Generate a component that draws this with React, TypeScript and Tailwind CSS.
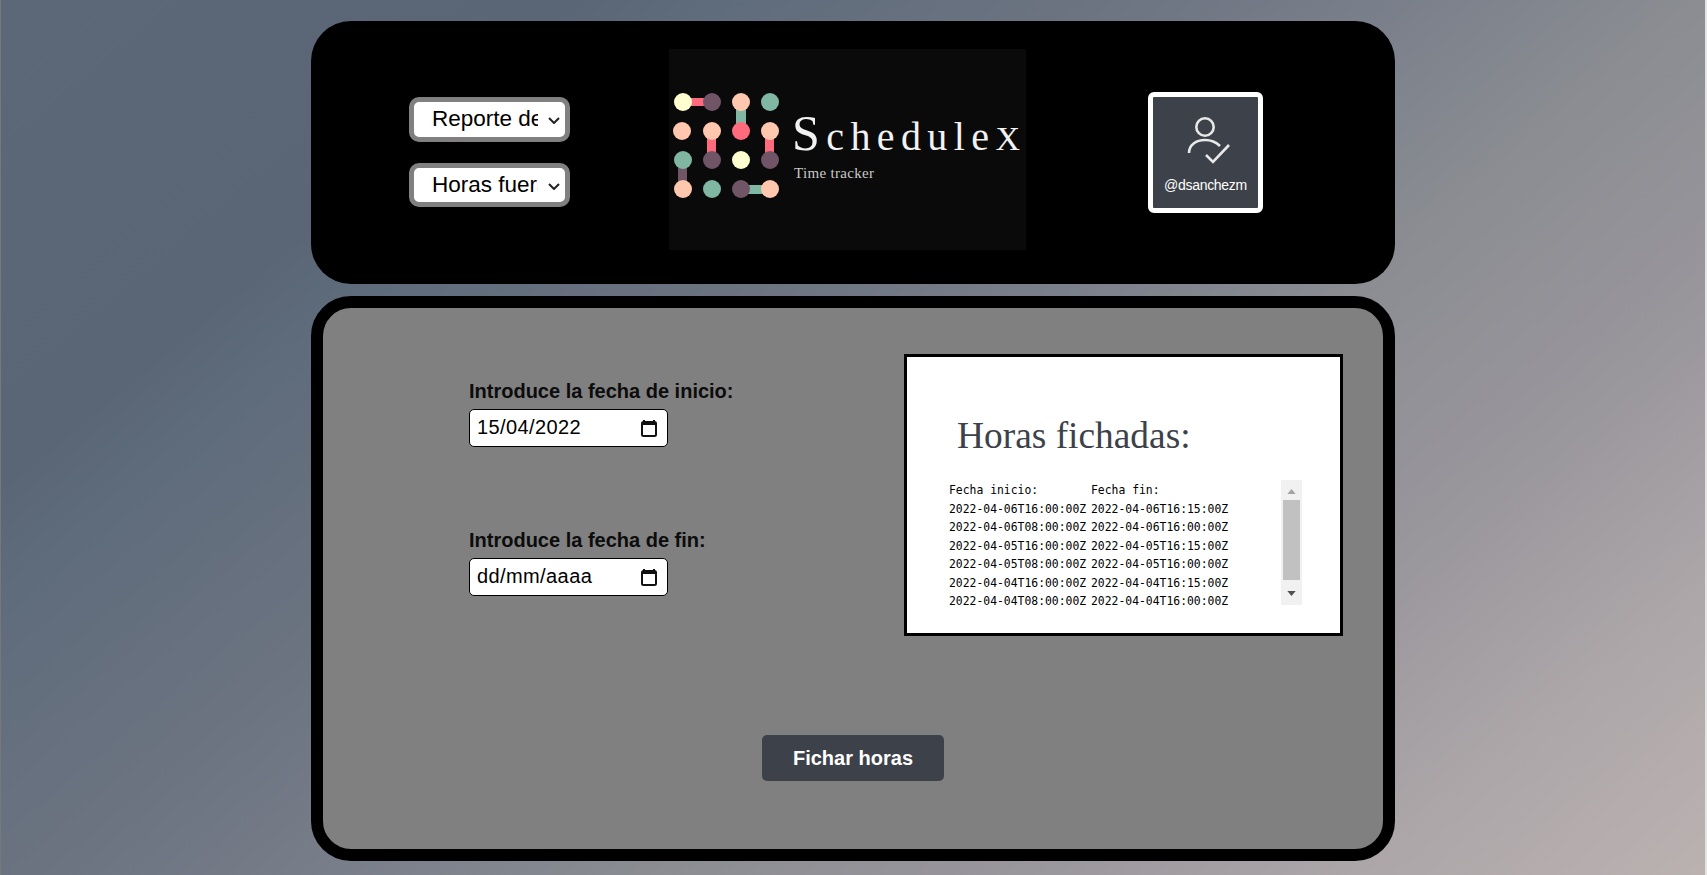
import { useState } from "react";

const rows = [
  ["2022-04-06T16:00:00Z", "2022-04-06T16:15:00Z"],
  ["2022-04-06T08:00:00Z", "2022-04-06T16:00:00Z"],
  ["2022-04-05T16:00:00Z", "2022-04-05T16:15:00Z"],
  ["2022-04-05T08:00:00Z", "2022-04-05T16:00:00Z"],
  ["2022-04-04T16:00:00Z", "2022-04-04T16:15:00Z"],
  ["2022-04-04T08:00:00Z", "2022-04-04T16:00:00Z"],
];

const Logo = () => {
  const dots: [number, number, string][] = [
    [14, 53, "#ffffd0"], [43, 53, "#6f5566"], [72, 53, "#ffc8ae"], [101, 53, "#7fb7a3"],
    [13, 82, "#ffc8ae"], [43, 82, "#ffc8ae"], [72, 82, "#ff6b7d"], [101, 82, "#ffc8ae"],
    [14, 111, "#7fb7a3"], [43, 111, "#6f5566"], [72, 111, "#ffffd0"], [101, 111, "#6f5566"],
    [14, 140, "#ffc8ae"], [43, 140, "#7fb7a3"], [72, 140, "#6f5566"], [101, 140, "#ffc8ae"],
  ];
  return (
    <svg viewBox="0 0 357 201" className="w-[357px] h-[201px] bg-[#0a0a0a]">
      <rect x="22" y="49" width="16" height="8" fill="#ff6b7d" />
      <rect x="67" y="58" width="10" height="20" fill="#7fb7a3" />
      <rect x="38" y="88" width="9" height="18" fill="#ff6b7d" />
      <rect x="96" y="88" width="9" height="18" fill="#ff6b7d" />
      <rect x="9" y="117" width="9" height="18" fill="#6f5566" />
      <rect x="78" y="136" width="18" height="9" fill="#7fb7a3" />
      {dots.map(([cx, cy, fill]) => (
        <circle key={`${cx}-${cy}`} cx={cx} cy={cy} r="9" fill={fill} />
      ))}
      <text x="123" y="101" fill="#f2f2f2" fontFamily="'Liberation Serif', serif" fontSize="40" textLength="228">
        <tspan fontSize="50">S</tspan>chedule<tspan fontSize="34">X</tspan>
      </text>
      <text x="125" y="129" fill="#c8c8c8" fontFamily="'Liberation Serif', serif" fontSize="15" textLength="80">
        Time tracker
      </text>
    </svg>
  );
};

const CalendarIcon = () => (
  <svg viewBox="0 0 16 18" className="w-4 h-[18px] shrink-0">
    <path d="M3 1v2M13 1v2" stroke="#111" strokeWidth="2" />
    <rect x="1" y="3" width="14" height="14" rx="1.5" fill="#fff" stroke="#111" strokeWidth="2" />
    <rect x="1" y="3" width="14" height="3" fill="#111" />
  </svg>
);

const MenuSelect = ({ option, tall }: { option: string; tall?: boolean }) => (
  <div className="relative w-[161px]">
    <select
      className={
        tall
          ? "appearance-none w-full h-[45px] bg-white text-black text-[22.5px] border-[5px] border-[#808080] rounded-[10px] pl-[18px] pr-[27px] pb-[2px]"
          : "appearance-none w-full h-[44px] bg-white text-black text-[22.5px] border-[5px] border-[#808080] rounded-[10px] pl-[18px] pr-[27px] pb-[2px]"
      }
    >
      <option>{option}</option>
    </select>
    <svg viewBox="0 0 12 7" className="absolute right-[10px] top-[20px] w-3 h-[7px] pointer-events-none">
      <path d="M1 1l5 5 5-5" fill="none" stroke="#222" strokeWidth="2" />
    </svg>
  </div>
);

const DateField = ({ label, value, placeholder }: { label: string; value?: string; placeholder?: string }) => {
  const [date, setDate] = useState(value ?? "");
  return (
    <label className="flex flex-col items-start">
      <span className="text-[20px] leading-[23px] font-bold text-[#0c0c0c] mb-[6px]">{label}</span>
      <span className="w-[199px] h-[38px] flex items-center bg-white border border-black rounded-[5px] pl-[7px] pr-[10px]">
        <input
          type="text"
          value={date}
          placeholder={placeholder}
          onChange={(e) => setDate(e.target.value)}
          className="w-full min-w-0 text-[20px] tracking-[0.4px] text-black placeholder:text-black outline-none pb-[2px]"
        />
        <CalendarIcon />
      </span>
    </label>
  );
};

export default function App() {
  return (
    <div className="min-h-screen flex flex-col items-center pt-[21px] border-l border-r-2 border-l-[#77787a] border-r-[#e4e4e4] font-['Liberation_Sans',Arial,sans-serif] bg-[linear-gradient(140deg,#5c6877_0%,#5a6676_21%,#5f6c7c_26%,#6b7380_39%,#787e8a_50%,#8b8d92_62%,#99969c_75%,#ada7a9_88%,#bbb1b1_100%)]">
      <header className="w-[1084px] h-[263px] bg-black rounded-[40px] flex items-start">
        <div className="w-[358px] pl-[98px] pt-[76px] flex flex-col gap-[21px]">
          <MenuSelect option="Reporte de horas" tall />
          <MenuSelect option="Horas fuera de turno" />
        </div>
        <div className="pt-[28px]">
          <Logo />
        </div>
        <div className="ml-[122px] mt-[71px] w-[115px] h-[121px] bg-[#3d4149] border-[5px] border-white rounded-[6px] flex flex-col items-center">
          <svg viewBox="0 0 60 60" className="w-[60px] h-[60px] mt-[9px] ml-[5px]" fill="none" stroke="#e8e8e8" strokeWidth="2.6">
            <circle cx="27" cy="21" r="8.7" />
            <path d="M11 47c0-8 7-13 16-13 6 0 11 2 15 6" />
            <path d="M28 49l7 7 16-17" />
          </svg>
          <span className="text-[14px] leading-[16px] text-white mt-[11px] tracking-[-0.3px]">@dsanchezm</span>
        </div>
      </header>

      <main className="w-[1084px] h-[565px] mt-[12px] bg-[#808080] border-[12px] border-black rounded-[40px] flex flex-col">
        <div className="flex">
          <div className="w-[581px] pl-[146px] pt-[72px] flex flex-col gap-[82px]">
            <DateField label="Introduce la fecha de inicio:" value="15/04/2022" />
            <DateField label="Introduce la fecha de fin:" placeholder="dd/mm/aaaa" />
          </div>
          <section className="w-[439px] h-[282px] mt-[46px] bg-white border-[3px] border-black pl-[42px] flex flex-col">
            <h1 className="font-['Liberation_Serif',serif] text-[37.4px] leading-[42px] text-[#3d4149] ml-[8px] mt-[58px]">
              Horas fichadas:
            </h1>
            <div className="mt-[24px] h-[125px] flex">
              <div className="w-[332px] font-['DejaVu_Sans_Mono',monospace] text-[11.4px] leading-[18.5px] text-black whitespace-pre">
                <div className="flex">
                  <span className="w-[142px]">Fecha inicio:</span>
                  <span>Fecha fin:</span>
                </div>
                {rows.map(([start, end]) => (
                  <div key={start} className="flex">
                    <span className="w-[142px]">{start}</span>
                    <span>{end}</span>
                  </div>
                ))}
              </div>
              <div className="w-[21px] h-[125px] -mt-[1px] bg-[#f1f1f1] flex flex-col items-center">
                <svg viewBox="0 0 10 6" className="w-[9px] h-[5px] mt-[9px] mb-[6px]">
                  <path d="M0 6L5 0L10 6Z" fill="#a3a3a3" />
                </svg>
                <div className="w-[17px] h-[80px] bg-[#c1c1c1]" />
                <svg viewBox="0 0 10 6" className="w-[9px] h-[5px] mt-[11px]">
                  <path d="M0 0L10 0L5 6Z" fill="#505050" />
                </svg>
              </div>
            </div>
          </section>
        </div>
        <button className="self-start ml-[439px] mt-[99px] w-[182px] h-[46px] bg-[#3d4149] text-white text-[20px] font-bold rounded-[5px]">
          Fichar horas
        </button>
      </main>
    </div>
  );
}
